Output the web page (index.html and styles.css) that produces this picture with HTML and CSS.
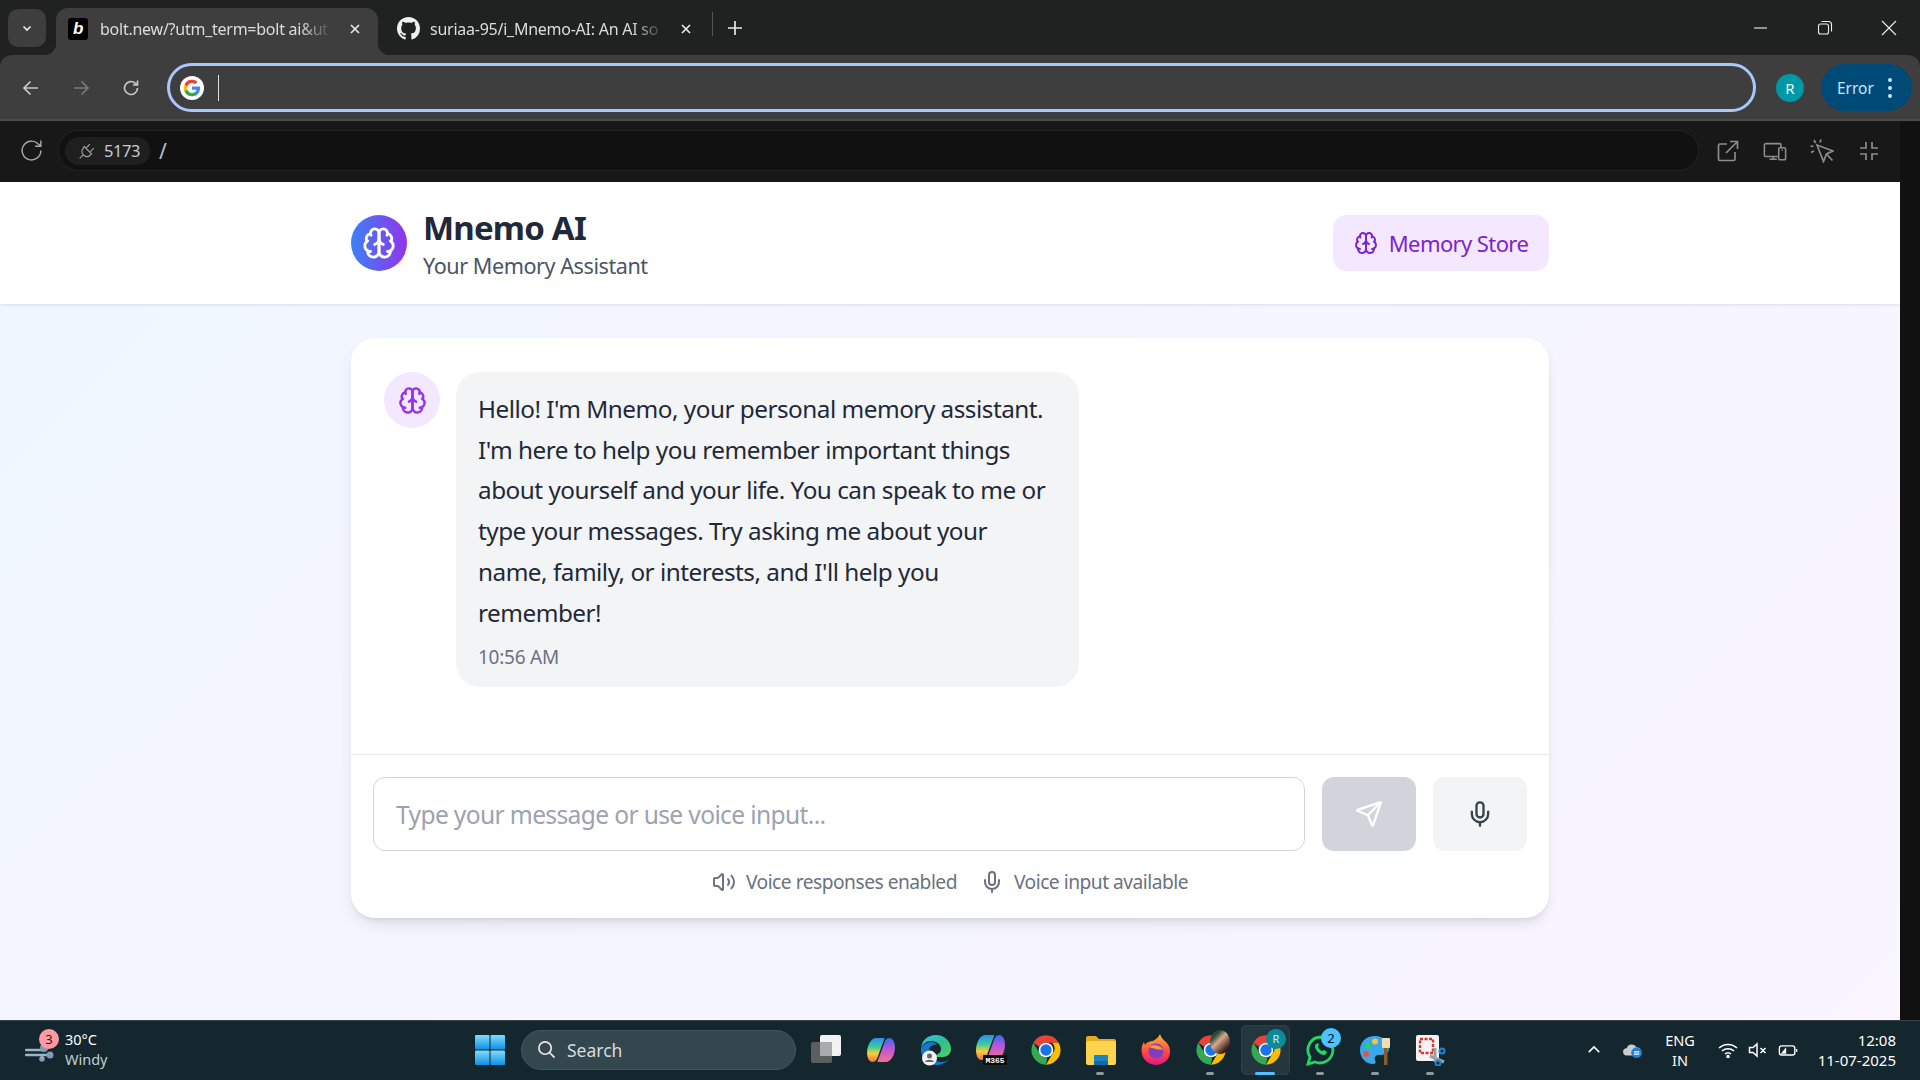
FILE: index.html
```html
<!DOCTYPE html>
<html lang="en">
<head>
<meta charset="utf-8">
<title>Mnemo AI</title>
<link rel="stylesheet" href="styles.css">
</head>
<body>
<svg class="defs" width="0" height="0" aria-hidden="true">
  <symbol id="brain" viewBox="0 0 24 24"><path d="M12 5a3 3 0 1 0-5.997.125 4 4 0 0 0-2.526 5.77 4 4 0 0 0 .556 6.588A4 4 0 1 0 12 18Z"/><path d="M12 5a3 3 0 1 1 5.997.125 4 4 0 0 1 2.526 5.77 4 4 0 0 1-.556 6.588A4 4 0 1 1 12 18Z"/><path d="M15 13a4.5 4.5 0 0 1-3-4 4.5 4.5 0 0 1-3 4"/><path d="M17.599 6.5a3 3 0 0 0 .399-1.375"/><path d="M6.003 5.125A3 3 0 0 0 6.401 6.5"/><path d="M3.477 10.896a4 4 0 0 1 .585-.396"/><path d="M19.938 10.5a4 4 0 0 1 .585.396"/><path d="M6 18a4 4 0 0 1-1.967-.516"/><path d="M19.967 17.484A4 4 0 0 1 18 18"/></symbol>
  <symbol id="mic" viewBox="0 0 24 24"><path d="M12 2a3 3 0 0 0-3 3v7a3 3 0 0 0 6 0V5a3 3 0 0 0-3-3Z"/><path d="M19 10v2a7 7 0 0 1-14 0v-2"/><path d="M12 19v3"/></symbol>
  <symbol id="chrome" viewBox="0 0 48 48">
    <path fill="#ea4335" d="M24 2a22 22 0 0 1 19 11H24a11 11 0 0 0-10 6L5 13A22 22 0 0 1 24 2Z"/>
    <path fill="#fbbc04" d="M43 13a22 22 0 0 1-19 33l10-17a11 11 0 0 0-1-16Z"/>
    <path fill="#34a853" d="M5 13l10 17a11 11 0 0 0 11 5l-2 11A22 22 0 0 1 5 13Z"/>
    <circle cx="24" cy="24" r="11" fill="#fff"/><circle cx="24" cy="24" r="8.5" fill="#1a73e8"/>
  </symbol>
  <linearGradient id="cpl" x1="0" y1="0" x2="0" y2="1"><stop offset="0" stop-color="#2f8ff0"/><stop offset=".35" stop-color="#35c8a0"/><stop offset=".65" stop-color="#f4d03a"/><stop offset="1" stop-color="#f2703c"/></linearGradient>
  <linearGradient id="cpr" x1="0" y1="0" x2="0" y2="1"><stop offset="0" stop-color="#2f6fe8"/><stop offset=".4" stop-color="#b455e0"/><stop offset="1" stop-color="#f7708a"/></linearGradient>
  <linearGradient id="edge" x1="0" y1="0" x2="1" y2="1"><stop offset="0" stop-color="#35c1f1"/><stop offset=".5" stop-color="#2fbf8f"/><stop offset="1" stop-color="#54d25f"/></linearGradient>
  <linearGradient id="fox" x1="0" y1="0" x2="0" y2="1"><stop offset="0" stop-color="#ffb52e"/><stop offset=".55" stop-color="#ff4f3e"/><stop offset="1" stop-color="#e31587"/></linearGradient>
  <linearGradient id="win" x1="0" y1="0" x2="0" y2="1"><stop offset="0" stop-color="#7fdcfb"/><stop offset="1" stop-color="#0f8fe8"/></linearGradient>
  <symbol id="copilot" viewBox="0 0 30 28">
    <path fill="url(#cpl)" d="M10 1h9l-7 19c-1 4-3 7-6 7-4 0-6-5-6-10C0 9 4 1 10 1Z"/>
    <path fill="url(#cpr)" d="M20 27h-9l7-19c1-4 3-7 6-7 4 0 6 5 6 10 0 8-4 16-10 16Z"/>
  </symbol>
</svg>

<div class="tabstrip">
  <span class="tab-menu"><svg class="i12" viewBox="0 0 12 12"><path d="M2.5 4.5 6 8l3.500-3.500"/></svg></span>
  <div class="tab active">
    <span class="fav-bolt">b</span>
    <span class="tab-title">bolt.new/?utm_term=bolt ai&amp;ut</span>
    <svg class="i12" viewBox="0 0 12 12"><path d="m2 2 8 8M10 2l-8 8"/></svg>
  </div>
  <div class="tab second">
    <svg class="fav-gh" viewBox="0 0 16 16"><path d="M8 0C3.580 0 0 3.580 0 8c0 3.540 2.290 6.530 5.470 7.590.4.070.55-.17.55-.38 0-.19-.01-.82-.01-1.490-2.010.37-2.530-.49-2.690-.94-.09-.23-.48-.94-.82-1.130-.28-.15-.68-.52-.01-.53.63-.01 1.080.58 1.230.82.72 1.210 1.870.87 2.330.66.070-.52.28-.87.51-1.070-1.780-.2-3.640-.89-3.640-3.950 0-.87.31-1.590.82-2.150-.08-.2-.36-1.020.08-2.120 0 0 .67-.21 2.200.82.640-.18 1.320-.27 2-.27s1.360.09 2 .27c1.530-1.040 2.200-.82 2.200-.82.44 1.100.16 1.920.08 2.120.51.560.82 1.270.82 2.150 0 3.070-1.870 3.750-3.650 3.950.29.25.54.73.54 1.480 0 1.070-.01 1.930-.01 2.200 0 .21.15.46.55.38A8.010 8.010 0 0 0 16 8c0-4.420-3.580-8-8-8Z"/></svg>
    <span class="tab-title">suriaa-95/i_Mnemo-AI: An AI so</span>
    <svg class="i12" viewBox="0 0 12 12"><path d="m2 2 8 8M10 2l-8 8"/></svg>
  </div>
  <span class="tab-sep"></span>
  <svg class="plus" viewBox="0 0 16 16"><path d="M8 1v14M1 8h14"/></svg>
  <div class="win-controls">
    <svg viewBox="0 0 16 16"><path d="M1 8h13"/></svg>
    <svg viewBox="0 0 16 16"><rect x="1.500" y="4" width="10" height="10" rx="2"/><path d="M4.500 1.500h7a3 3 0 0 1 3 3v7"/></svg>
    <svg viewBox="0 0 16 16"><path d="m1 1 14 14M15 1 1 15"/></svg>
  </div>
</div>

<div class="toolbar">
  <svg class="nav" viewBox="0 0 20 20"><path d="M17 10H3.500M9.500 3.500 3 10l6.500 6.500"/></svg>
  <svg class="nav dim" viewBox="0 0 20 20"><path d="M3 10h13.500M10.500 3.500 17 10l-6.500 6.500"/></svg>
  <svg class="nav" viewBox="0 0 20 20"><path d="M16.500 10a6.500 6.500 0 1 1-2-4.700L16.500 7M16.500 2.500V7H12"/></svg>
  <div class="omnibox">
    <span class="g-logo"><svg viewBox="0 0 24 24"><path fill="#4285f4" d="M21.600 12.200c0-.7-.06-1.400-.18-2H12v3.800h5.400a4.600 4.600 0 0 1-2 3v2.500h3.200c1.900-1.700 3-4.300 3-7.300Z"/><path fill="#34a853" d="M12 22c2.700 0 5-.9 6.600-2.500l-3.200-2.500c-.9.600-2 1-3.400 1-2.600 0-4.800-1.800-5.600-4.100H3.100v2.600A10 10 0 0 0 12 22Z"/><path fill="#fbbc05" d="M6.400 13.900a6 6 0 0 1 0-3.800V7.500H3.100a10 10 0 0 0 0 9Z"/><path fill="#ea4335" d="M12 6c1.500 0 2.800.5 3.800 1.500l2.900-2.900A10 10 0 0 0 3.100 7.500l3.300 2.600C7.200 7.800 9.400 6 12 6Z"/></svg></span>
    <span class="caret"></span>
  </div>
  <span class="profile">R</span>
  <span class="error-pill">Error<span class="kebab"><i></i><i></i><i></i></span></span>
</div>

<div class="body-row">
  <div class="main-col">
    <div class="devbar">
      <svg class="dev-reload" viewBox="0 0 24 24"><path d="M21 12a9 9 0 1 1-2.800-6.500L21 8M21 2.500V8h-5.500"/></svg>
      <div class="dev-address">
        <span class="port">
          <svg viewBox="0 0 16 16"><path d="M5.500 4l6.500 6.500-1.500 1.500a3.500 3.500 0 0 1-5 0l-1-1a3.500 3.500 0 0 1 0-5ZM7.500 5l3-3M11 8.500l3-3M4.500 11.500l-3 3"/></svg>
          5173
        </span>
        <span class="slash">/</span>
      </div>
      <div class="dev-tools">
        <svg viewBox="0 0 24 24"><path d="M11 5H4a1.500 1.500 0 0 0-1.500 1.500V20A1.500 1.500 0 0 0 4 21.500h13.500A1.500 1.500 0 0 0 19 20v-7M10 14 21.500 2.500M14 2.500h7.500V10"/></svg>
        <svg viewBox="0 0 26 24"><path d="M16 18H3a1.500 1.500 0 0 1-1.500-1.500v-11A1.500 1.500 0 0 1 3 4h15a1.500 1.500 0 0 1 1.500 1.500V8M7 21h8M11 18v3"/><rect x="17" y="8.500" width="7.500" height="13" rx="1.500"/><path d="M20 11h1.500"/></svg>
        <svg viewBox="0 0 24 24"><path d="m7 6 16 6-6.500 3-3 7.500Z"/><path d="m16.500 15 6 6.500M4 1l1.500 3M11 .5l-1 3M.5 7l3 .5M1 13.500 4 12"/></svg>
        <svg viewBox="0 0 24 24"><path d="M9 3v6H3M15 3v6h6M9 21v-6H3M15 21v-6h6"/></svg>
      </div>
    </div>

    <main class="page">
      <header class="app-header">
        <div class="app-header-inner">
          <div class="brand">
            <span class="logo"><svg class="lc i34"><use href="#brain"/></svg></span>
            <div class="brand-text">
              <h1>Mnemo AI</h1>
              <p>Your Memory Assistant</p>
            </div>
          </div>
          <button class="store-btn"><svg class="lc i24"><use href="#brain"/></svg>Memory Store</button>
        </div>
      </header>

      <section class="card">
        <div class="messages">
          <span class="avatar"><svg class="lc i29"><use href="#brain"/></svg></span>
          <div class="bubble">
            <p>Hello! I'm Mnemo, your personal memory assistant. I'm here to help you remember important things about yourself and your life. You can speak to me or type your messages. Try asking me about your name, family, or interests, and I'll help you remember!</p>
            <time>10:56 AM</time>
          </div>
        </div>
        <div class="composer">
          <div class="input-row">
            <div class="fake-input">Type your message or use voice input...</div>
            <button class="send"><svg class="lc i28" viewBox="0 0 24 24"><path d="M14.536 21.686a.5.5 0 0 0 .937-.024l6.500-19a.496.496 0 0 0-.635-.635l-19 6.500a.5.5 0 0 0-.024.937l7.930 3.180a2 2 0 0 1 1.112 1.110z"/><path d="m21.854 2.147-10.940 10.939"/></svg></button>
            <button class="micbtn"><svg class="lc i28"><use href="#mic"/></svg></button>
          </div>
          <div class="hints">
            <span class="hint"><svg class="lc i24" viewBox="0 0 24 24"><path d="M11 4.702a.705.705 0 0 0-1.203-.498L6.413 7.587A1.400 1.400 0 0 1 5.416 8H3a1 1 0 0 0-1 1v6a1 1 0 0 0 1 1h2.416a1.400 1.400 0 0 1 .997.413l3.383 3.384A.705.705 0 0 0 11 19.298z"/><path d="M16 9a5 5 0 0 1 0 6"/><path d="M19.364 18.364a9 9 0 0 0 0-12.728"/></svg>Voice responses enabled</span>
            <span class="hint"><svg class="lc i24"><use href="#mic"/></svg>Voice input available</span>
          </div>
        </div>
      </section>
    </main>
  </div>
  <div class="scroll-strip"></div>
</div>

<footer class="taskbar">
  <div class="weather">
    <span class="wx-icon">
      <svg viewBox="0 0 30 20"><path d="M1 8h18M1 13h24" fill="none" stroke="#9db4c6" stroke-width="2.400" stroke-linecap="round"/><circle cx="19" cy="6" r="4" fill="#7f9cb3"/><circle cx="25" cy="13" r="3.500" fill="#7f9cb3"/><circle cx="17" cy="17" r="2.800" fill="#7f9cb3"/><path d="M17 13v4" stroke="#9db4c6" stroke-width="2.400"/></svg>
      <b class="wx-badge">3</b>
    </span>
    <div class="wx-text"><span>30°C</span><span class="wx-sub">Windy</span></div>
  </div>
  <div class="center">
    <svg class="start" viewBox="0 0 30 30"><rect width="14.500" height="14.500" rx="1" fill="url(#win)"/><rect x="15.500" width="14.500" height="14.500" rx="1" fill="url(#win)"/><rect y="15.500" width="14.500" height="14.500" rx="1" fill="url(#win)"/><rect x="15.500" y="15.500" width="14.500" height="14.500" rx="1" fill="url(#win)"/></svg>
    <div class="search"><svg viewBox="0 0 20 20"><circle cx="8.500" cy="8.500" r="6.500"/><path d="m13.500 13.500 5 5"/></svg>Search</div>
    <div class="apps">
      <span class="app"><svg viewBox="0 0 32 32"><rect x="1" y="8" width="21" height="21" rx="2" fill="#5c5f60"/><rect x="10" y="1" width="21" height="21" rx="2" fill="#f2f2f2"/><rect x="10" y="8" width="12" height="14" fill="#a9acad"/></svg></span>
      <span class="app"><svg class="copilot-icon" viewBox="0 0 30 28"><use href="#copilot"/></svg></span>
      <span class="app"><svg viewBox="0 0 32 32"><path d="M1 14C2 6 8 1 16 1c8 0 15 6 15 14 0 5-4 8-8 8h-7c-2 0-3-1-3-2 3 0 8-1 8-6 0-5-5-8-10-8-5 0-8 3-10 7Z" fill="url(#edge)"/><path d="M1 14c3-4 6-6 10-6 3 0 5 1 6 3-6-1-9 3-8 8 1 6 7 9 13 9 3 0 5-1 7-3-3 4-8 6-13 6C7 31 0 24 1 14Z" fill="#1678c8"/><circle cx="9.500" cy="24" r="7.500" fill="#f2f2f2"/><circle cx="9.500" cy="22" r="2.500" fill="#666"/><path d="M5 28c1-3 8-3 9 0Z" fill="#666"/></svg></span>
      <span class="app"><svg viewBox="0 0 32 32"><use href="#copilot" width="31" height="27"/><rect x="8" y="21" width="24" height="10" rx="1" fill="#0c0c0c"/><text x="20" y="29" class="m365">M365</text></svg></span>
      <span class="app"><svg viewBox="0 0 48 48"><use href="#chrome"/></svg></span>
      <span class="app running"><svg viewBox="0 0 32 32"><path d="M1 4a2 2 0 0 1 2-2h8l3 3h15a2 2 0 0 1 2 2v4H1Z" fill="#e8a91f"/><rect x="1" y="7" width="30" height="24" rx="2" fill="#fcd34d"/><rect x="9" y="21" width="14" height="6" rx="1" fill="#1684c9"/><rect x="9" y="27" width="14" height="4" fill="#0f6cab"/></svg></span>
      <span class="app"><svg viewBox="0 0 32 32"><path d="M20 0c1 4 4 6 7 9 4 5 4 12 0 17-5 6-16 7-22 0C0 20 1 12 4 8l1 3c2-3 5-4 8-4 3-2 6-4 7-7Z" fill="url(#fox)"/><circle cx="16" cy="17" r="7.500" fill="#7b3fc4"/><path d="M9 13c4-3 12-2 14 3-3-1-5 0-7-1-3-1-5-1-7-2Z" fill="#ff9a2e"/></svg></span>
      <span class="app running">
        <svg viewBox="0 0 48 48"><use href="#chrome"/></svg>
        <span class="pfp"></span>
      </span>
      <span class="app running current">
        <svg viewBox="0 0 48 48"><use href="#chrome"/></svg>
        <b class="app-r">R</b>
      </span>
      <span class="app running">
        <svg viewBox="0 0 32 32"><path d="M16 3a13 13 0 0 0-11 20l-2 7 7-2A13 13 0 1 0 16 3Z" fill="none" stroke="#25d366" stroke-width="2.800"/><path d="M11 10c-2 2-1 5 2 8s6 4 8 2l1-2-3-2-2 1c-1 0-3-2-4-4l1-2-1-2-2 1Z" fill="#25d366"/></svg>
        <b class="app-count">2</b>
      </span>
      <span class="app running"><svg viewBox="0 0 32 32"><path d="M15 2C6 2 0 8 0 16c0 8 6 14 13 14 3 0 3-2 2-4-1-3 1-5 4-5 5 0 10-1 10-7C29 7 23 2 15 2Z" fill="#3ba7e8"/><circle cx="8" cy="12" r="3" fill="#2ecc71"/><circle cx="15" cy="7.500" r="3" fill="#f4c542"/><circle cx="6" cy="20" r="3" fill="#e8523f"/><rect x="24" y="13" width="3.500" height="18" fill="#8a5a2b"/><rect x="22" y="4" width="8" height="10" rx="1" fill="#f3ddb3"/></svg></span>
      <span class="app running"><svg viewBox="0 0 32 32"><rect x="1" y="1" width="23" height="26" rx="2" fill="#f3f3f3"/><rect x="5" y="5" width="13" height="14" fill="none" stroke="#d9352a" stroke-width="2.400" stroke-dasharray="3 1.500"/><path d="M20 14v14M15 22l14 6" stroke="#9aa0a3" stroke-width="3"/><circle cx="27" cy="17" r="2.500" fill="none" stroke="#1e88d6" stroke-width="2"/><circle cx="23" cy="29" r="2.500" fill="none" stroke="#1e88d6" stroke-width="2"/></svg></span>
    </div>
  </div>
  <div class="tray">
    <svg class="tray-chev" viewBox="0 0 16 10"><path d="m2 8 6-6 6 6"/></svg>
    <svg class="tray-cloud" viewBox="0 0 24 20"><path d="M5 16a4 4 0 0 1 0-8 6 6 0 0 1 11-1 5 5 0 0 1 3 9Z" fill="#c9cdd0"/><circle cx="16" cy="13" r="6" fill="#1f7fd8"/><path d="M13 12h6M13 14.500h6" stroke="#fff" stroke-width="1.400"/></svg>
    <div class="lang"><span>ENG</span><span>IN</span></div>
    <div class="tray-icons">
      <svg viewBox="0 0 20 16"><path d="M1 6a13 13 0 0 1 18 0M4 9a9 9 0 0 1 12 0M7 12a4.500 4.500 0 0 1 6 0"/><circle cx="10" cy="14.500" r="1" fill="#fff"/></svg>
      <svg viewBox="0 0 20 16"><path d="M1.500 5.500H5L9 2v12l-4-3.500H1.500ZM12.500 6l5 5M17.500 6l-5 5"/></svg>
      <svg viewBox="0 0 22 16"><rect x="1.500" y="3.500" width="17" height="10" rx="2.500"/><path d="M20.500 7v3"/><path class="solid" d="M3 12l6-7v7Z"/></svg>
    </div>
    <div class="clock"><span>12:08</span><span>11-07-2025</span></div>
  </div>
</footer>
</body>
</html>
```
FILE: styles.css
```css
* { box-sizing: border-box; }
html, body { margin: 0; height: 100%; overflow: hidden; }
body {
  display: flex;
  flex-direction: column;
  width: 1920px;
  height: 1080px;
  font-family: "Noto Sans", "Open Sans", "Liberation Sans", sans-serif;
  background: #202222;
  color: #e6e6e6;
}
.defs { position: absolute; }
svg { display: block; }
p, h1 { margin: 0; }
button { border: 0; font: inherit; padding: 0; }

/* Tab strip */
.tabstrip { height: 55px; display: flex; align-items: flex-end; padding-left: 8px; background: #202222; flex: none; }
.tab-menu { width: 38px; height: 38px; margin-bottom: 8px; border-radius: 10px; background: #3e3e3e; display: flex; align-items: center; justify-content: center; }
.i12 { width: 12px; height: 12px; flex: none; fill: none; stroke: #e8e8e8; stroke-width: 1.700; }
.tab { width: 331px; height: 47px; display: flex; align-items: center; padding: 0 17px 6px 12px; gap: 12px; border-radius: 12px 12px 0 0; font-size: 16px; letter-spacing: -0.25px; }
.tab.active { position: relative; width: 322px; margin-left: 10px; background: #3e3e3e; }
.tab.active::before, .tab.active::after { content: ""; position: absolute; bottom: 0; width: 12px; height: 12px; }
.tab.active::before { left: -12px; background: radial-gradient(circle at 0 0, transparent 12px, #3e3e3e 12.500px); }
.tab.active::after { right: -12px; background: radial-gradient(circle at 100% 0, transparent 12px, #3e3e3e 12.500px); }
.tab.second { gap: 10px; }
.tab-title { flex: 1; min-width: 0; white-space: nowrap; color: #dcdcdc; -webkit-mask-image: linear-gradient(to right, #000 84%, transparent 98%); mask-image: linear-gradient(to right, #000 84%, transparent 98%); }
.fav-bolt { width: 20px; height: 22px; border-radius: 3px; background: #000; color: #fff; font: italic 700 17px/22px "Liberation Sans", sans-serif; text-align: center; flex: none; }
.fav-gh { width: 23px; height: 23px; fill: #f0f0f0; flex: none; margin-left: 7px; }
.tab-sep { width: 1px; height: 24px; background: #555; margin: 0 0 19px 3px; }
.plus { width: 16px; height: 16px; margin: 0 0 19px 14px; fill: none; stroke: #e8e8e8; stroke-width: 1.700; }
.win-controls { margin-left: auto; display: flex; align-self: flex-start; gap: 48px; padding: 20px 23px 0 0; }
.win-controls svg { width: 16px; height: 16px; fill: none; stroke: #eee; stroke-width: 1.100; }

/* Toolbar */
.toolbar { height: 66px; flex: none; display: flex; align-items: center; background: #3e3e3e; border-radius: 12px 12px 0 0; padding: 1px 9px 0 21px; border-bottom: 2px solid #4a4a4a; }
.nav { width: 20px; height: 20px; margin-right: 30px; fill: none; stroke: #c7c7c7; stroke-width: 1.700; flex: none; }
.nav.dim { stroke: #7a7a7a; }
.omnibox { width: 1589px; height: 49px; margin-left: -4px; border: 3px solid #a8c7fa; border-radius: 25px; display: flex; align-items: center; padding-left: 10px; background: #3e3e3e; flex: none; }
.g-logo { width: 24px; height: 24px; background: #fff; border-radius: 50%; padding: 2px; flex: none; }
.caret { width: 1px; height: 26px; margin-left: 14px; background: #ddd; }
.profile { width: 28px; height: 28px; margin-left: 20px; border-radius: 50%; background: #0097a7; color: #f2ffff; font-size: 15px; line-height: 28px; text-align: center; flex: none; }
.error-pill { width: 91px; height: 47px; margin-left: 17px; border-radius: 24px; background: #004a77; color: #c2e7ff; font-size: 15.500px; display: flex; align-items: center; padding-left: 16px; gap: 14px; flex: none; }
.kebab { display: flex; flex-direction: column; gap: 4px; }
.kebab i { width: 4px; height: 4px; border-radius: 50%; background: #c2e7ff; }

/* Body */
.body-row { flex: 1; display: flex; min-height: 0; }
.main-col { flex: 1; display: flex; flex-direction: column; min-width: 0; }
.scroll-strip { width: 20px; background: #111; }

/* Dev bar */
.devbar { height: 61px; flex: none; display: flex; align-items: center; padding: 0 22px 2px 19px; background: #181818; }
.dev-reload { width: 25px; height: 25px; margin-right: 14px; fill: none; stroke: #a8a8a8; stroke-width: 1.400; flex: none; }
.dev-address { width: 1641px; height: 41px; border: 1px solid #242424; border-radius: 21px; background: #111; display: flex; align-items: center; padding-left: 6px; gap: 9px; flex: none; }
.port { width: 85px; height: 28px; padding-left: 13px; border-radius: 14px; background: #1f1f1f; color: #c3c9d2; font-size: 16.500px; letter-spacing: -0.400px; display: flex; align-items: center; gap: 8px; }
.port svg { width: 18px; height: 18px; fill: none; stroke: #a0a0a0; stroke-width: 1; }
.slash { color: #b8c0cc; font-size: 21px; }
.dev-tools { display: flex; gap: 23px; margin-left: 17px; }
.dev-tools svg { width: 24px; height: 24px; fill: none; stroke: #8c8c8c; stroke-width: 1.700; }

/* App page */
.page { flex: 1; min-height: 0; background: linear-gradient(135deg, #eff6ff, #faf5ff); }
.app-header { height: 122px; background: #fff; box-shadow: 0 1px 3px rgba(0,0,0,.1); display: flex; align-items: center; }
.app-header-inner { width: 1198px; margin: 0 auto; display: flex; align-items: center; justify-content: space-between; }
.brand { display: flex; align-items: center; gap: 16px; }
.brand-text { padding-top: 4px; }
.logo { width: 56px; height: 56px; border-radius: 50%; background: linear-gradient(to right, #3b82f6, #9333ea); display: flex; align-items: center; justify-content: center; }
.lc { fill: none; stroke: currentColor; stroke-width: 2; stroke-linecap: round; stroke-linejoin: round; flex: none; }
.i34 { width: 34px; height: 34px; color: #fff; }
.i29 { width: 29px; height: 29px; }
.i28 { width: 28px; height: 28px; }
.i24 { width: 24px; height: 24px; }
h1 { font-size: 33px; line-height: 42px; font-weight: 700; letter-spacing: -0.800px; color: #1f2937; }
.brand p { font-size: 21.600px; line-height: 34px; letter-spacing: -0.450px; color: #4b5563; }
.store-btn { width: 216px; height: 56px; border-radius: 14px; background: #f3e8ff; color: #7e22ce; font-size: 22px; letter-spacing: -0.600px; display: flex; align-items: center; justify-content: center; gap: 11px; }

.card { width: 1198px; height: 580px; margin: 34px auto 0; background: #fff; border-radius: 24px; box-shadow: 0 8px 16px -4px rgba(0,0,0,.12), 0 4px 6px -4px rgba(0,0,0,.1); display: flex; flex-direction: column; }
.messages { height: 416px; padding: 34px 33px; display: flex; align-items: flex-start; gap: 16px; flex: none; }
.avatar { width: 56px; height: 56px; border-radius: 50%; background: #f3e8ff; color: #9333ea; display: flex; align-items: center; justify-content: center; flex: none; }
.bubble { width: 623px; height: 315px; padding: 17px 22px; border-radius: 24px; background: #f3f4f6; color: #1f2937; font-size: 24.300px; line-height: 40.700px; letter-spacing: -0.500px; }
.bubble time { display: block; margin-top: 10px; font-size: 19px; line-height: 28px; letter-spacing: -0.250px; color: #6b7280; }
.composer { flex: 1; border-top: 1px solid #e5e7eb; padding: 22px 22px 0; }
.input-row { display: flex; gap: 17px; height: 74px; }
.fake-input { flex: 1; border: 1px solid #d1d5db; border-radius: 12px; padding: 0 22px; font-size: 24.600px; letter-spacing: -0.650px; line-height: 73px; color: #9ca3af; }
.send, .micbtn { width: 94px; border-radius: 12px; display: flex; align-items: center; justify-content: center; }
.send { background: #d1d5db; color: #fff; }
.micbtn { background: #f3f4f6; color: #374151; }
.hints { display: flex; justify-content: center; gap: 23px; margin-top: 17px; font-size: 19.200px; letter-spacing: -0.500px; line-height: 28px; color: #6b7280; }
.hint { display: flex; align-items: center; gap: 10px; }

/* Taskbar */
.taskbar { height: 60px; flex: none; display: flex; align-items: center; background: #14262e; border-top: 1px solid #3a4448; color: #fff; padding-bottom: 2px; }
.weather { width: 475px; display: flex; align-items: center; padding-left: 25px; gap: 10px; flex: none; }
.wx-icon { position: relative; width: 30px; height: 20px; margin-top: 4px; }
.wx-icon svg { width: 30px; height: 20px; }
.wx-badge { position: absolute; left: 14px; top: -13px; width: 20px; height: 20px; border-radius: 50%; background: #ff9aa2; color: #222; font: 400 13px/20px "Noto Sans", sans-serif; text-align: center; }
.wx-text { display: flex; flex-direction: column; margin-bottom: 2px; font-size: 14.500px; line-height: 20px; }
.wx-sub { color: #c6ccd0; }
.center { display: flex; align-items: center; flex: none; }
.start { width: 30px; height: 30px; margin-right: 16px; }
.search { width: 275px; height: 40px; margin-right: 2px; border-radius: 20px; background: #35474e; border: 1px solid #46565c; color: #d6dcde; font-size: 17.500px; display: flex; align-items: center; gap: 11px; padding-left: 15px; }
.search svg { width: 19px; height: 19px; fill: none; stroke: #e6e6e6; stroke-width: 1.800; }
.apps { display: flex; }
.app { position: relative; width: 55px; height: 50px; display: flex; align-items: center; justify-content: center; }
.app > svg { width: 32px; height: 32px; position: relative; }
.app > svg.copilot-icon { width: 28px; height: 26px; }
.app.running::after { content: ""; position: absolute; left: 23px; bottom: 0; width: 8px; height: 3px; border-radius: 2px; background: #8f9a9f; }
.app.current::before { content: ""; position: absolute; inset: 0 3px; border-radius: 5px; background: #24363e; border: 1px solid #2e4048; }
.app.current::after { left: 17px; width: 20px; background: #4cc2ff; }
.m365 { font: 700 8px "Liberation Mono", monospace; fill: #fff; text-anchor: middle; }
.pfp { position: absolute; right: 8px; top: 5px; width: 20px; height: 24px; border-radius: 50%; background: linear-gradient(135deg, #2d4a3e 25%, #d9a88a 45%, #3a1f1a 80%); }
.app-r { position: absolute; right: 7px; top: 4px; width: 20px; height: 20px; border-radius: 50%; background: #0a8c9c; color: #cfeff3; font: 400 11px/20px "Noto Sans", sans-serif; text-align: center; }
.app-count { position: absolute; right: 7px; top: 3px; width: 20px; height: 20px; border-radius: 50%; background: #4cc2ff; color: #111; font: 400 13px/20px "Noto Sans", sans-serif; text-align: center; }
.tray { flex: 1; display: flex; align-items: center; padding-right: 24px; color: #fff; }
.tray-chev { width: 14px; height: 9px; margin-left: 129px; fill: none; stroke: #fff; stroke-width: 1.800; }
.tray-cloud { width: 22px; height: 18px; margin-left: 21px; }
.lang { width: 48px; margin-left: 12px; display: flex; flex-direction: column; align-items: center; font-size: 14.500px; line-height: 20px; }
.tray-icons { display: flex; gap: 10px; margin-left: 14px; }
.tray-icons svg { width: 20px; height: 16px; fill: none; stroke: #fff; stroke-width: 1.500; }
.tray-icons .solid { fill: #fff; stroke: none; }
.clock { margin-left: auto; display: flex; flex-direction: column; align-items: flex-end; font-size: 15px; line-height: 20px; }
```
